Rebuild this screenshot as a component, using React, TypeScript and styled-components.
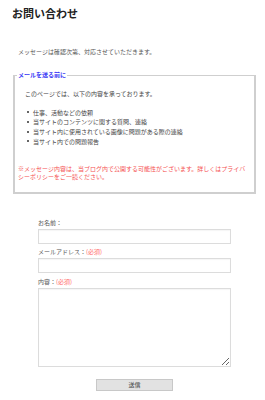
import { createGlobalStyle, styled } from "styled-components";

const GlobalStyle = createGlobalStyle`
  html, body {
    margin: 0;
    padding: 0;
    background: #fff;
  }
  body {
    font-family: "Noto Sans CJK JP", "Noto Sans", sans-serif;
    color: #555;
  }
`;

const Page = styled.div`
  width: 265px;
  box-sizing: border-box;
  padding: 5px 9px 0 13px;
`;

const Title = styled.h2`
  margin: 0 0 0 -1px;
  font-size: 11px;
  line-height: 16px;
  font-weight: bold;
  color: #222;
`;

const Lead = styled.p`
  margin: 26px 0 0;
  padding-left: 5px;
  font-size: 6px;
  line-height: 10px;
  color: #555;
`;

const Box = styled.fieldset`
  margin: 14px 0 0;
  padding: 0 7px 10.5px 3px;
  border: solid #cfcfcf;
  border-width: 1px 2px 2px 2px;
  min-width: 0;
`;

const BoxLegend = styled.legend`
  padding: 0 1px;
  margin-left: -1px;
  font-size: 6px;
  line-height: 8px;
  font-weight: bold;
  color: #3a3af5;
`;

const Intro = styled.p`
  margin: 10px 0 0;
  padding-left: 7px;
  font-size: 6px;
  line-height: 10px;
  color: #444;
`;

const List = styled.ul`
  margin: 8.5px 0 0;
  padding-left: 9px;
  list-style: none;
  font-size: 6px;
  line-height: 9.7px;
  color: #444;
`;

const Item = styled.li`
  display: flex;
  align-items: center;

  &::before {
    content: "";
    flex: none;
    width: 2px;
    height: 2px;
    border-radius: 50%;
    background: #333;
    margin-right: 4px;
  }
`;

const Note = styled.p`
  margin: 18.3px 0 0;
  font-size: 6px;
  line-height: 8.3px;
  color: #f55252;
`;

const Form = styled.form`
  width: 193px;
  margin: 25px auto 0;
  display: flex;
  flex-direction: column;
`;

const Label = styled.label<{ $first?: boolean }>`
  margin-top: ${(p) => (p.$first ? "0" : "4.5px")};
  font-size: 6px;
  line-height: 8px;
  color: #555;
`;

const Required = styled.span`
  color: #f66;
`;

const Input = styled.input`
  margin-top: 2px;
  height: 15px;
  box-sizing: border-box;
  border: 1px solid #dcdcdc;
  box-shadow: inset 0 1px 1px rgba(0, 0, 0, 0.04);
  padding: 0 3px;
  font-size: 6px;
  outline: none;
`;

const TextArea = styled.textarea`
  margin-top: 2.3px;
  height: 79px;
  box-sizing: border-box;
  border: 1px solid #dcdcdc;
  box-shadow: inset 0 1px 1px rgba(0, 0, 0, 0.04);
  padding: 2px 3px;
  font-size: 6px;
  outline: none;
`;

const Submit = styled.button`
  align-self: center;
  margin-top: 12px;
  width: 77px;
  height: 12px;
  padding: 0;
  border: 1px solid #c8c8c8;
  background: #e2e2e2;
  color: #444;
  font-family: "Noto Sans CJK JP", sans-serif;
  font-size: 6px;
  line-height: 10px;
`;

const items = [
  "仕事、活動などの依頼",
  "当サイトのコンテンツに関する質問、連絡",
  "当サイト内に使用されている画像に問題がある際の連絡",
  "当サイト内での問題報告",
];

const App = () => {
  return (
    <>
      <GlobalStyle />
      <Page>
        <Title>お問い合わせ</Title>
        <Lead>メッセージは確認次第、対応させていただきます。</Lead>
        <Box>
          <BoxLegend>メールを送る前に</BoxLegend>
          <Intro>このページでは、以下の内容を承っております。</Intro>
          <List>
            {items.map((item) => (
              <Item key={item}>{item}</Item>
            ))}
          </List>
          <Note>
            ※メッセージ内容は、当ブログ内で公開する可能性がございます。詳しくはプライバシーポリシーをご一読ください。
          </Note>
        </Box>
        <Form onSubmit={(e) => e.preventDefault()}>
          <Label $first>お名前：</Label>
          <Input type="text" />
          <Label>
            メールアドレス：<Required>(必須)</Required>
          </Label>
          <Input type="email" />
          <Label>
            内容：<Required>(必須)</Required>
          </Label>
          <TextArea />
          <Submit type="submit">送信</Submit>
        </Form>
      </Page>
    </>
  );
};

export default App;
